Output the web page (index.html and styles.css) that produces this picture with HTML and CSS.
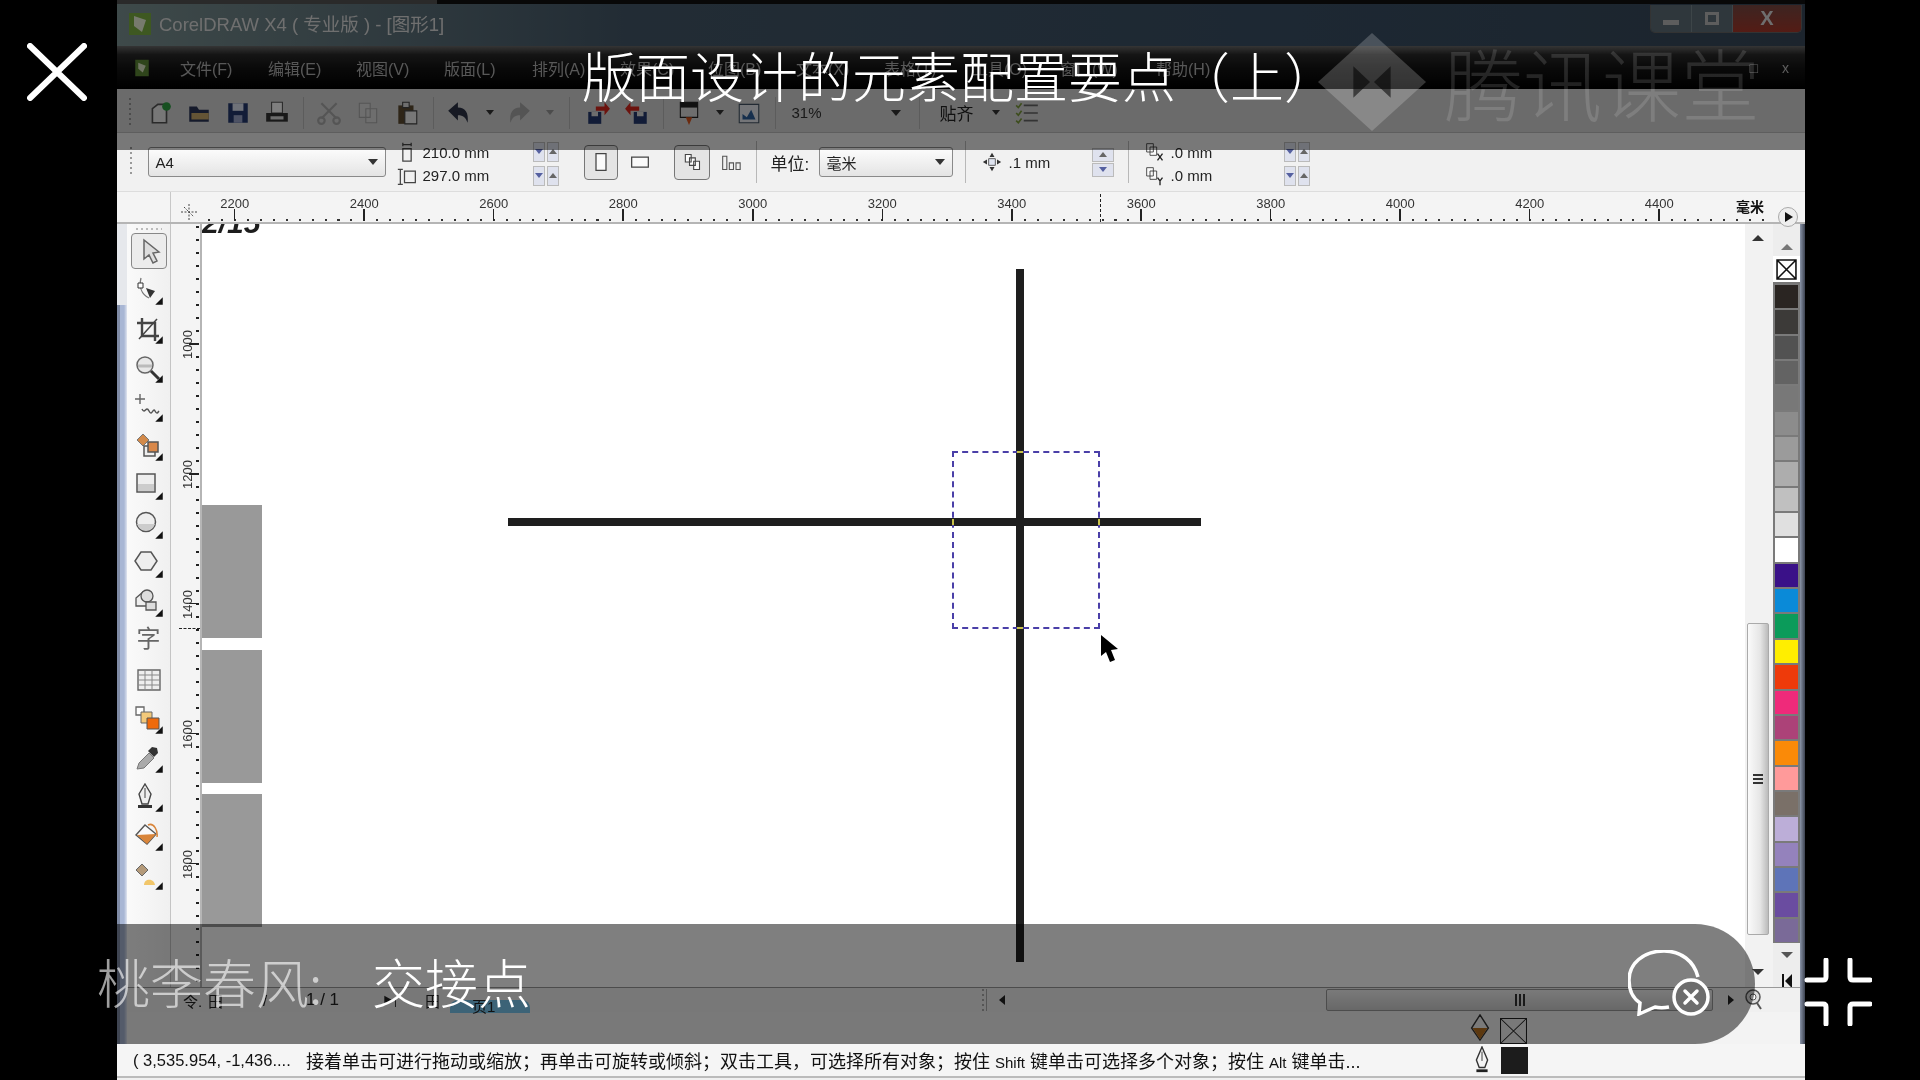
FILE: index.html
```html
<!DOCTYPE html>
<html lang="zh-CN">
<head>
<meta charset="utf-8">
<title>版面设计的元素配置要点（上）</title>
<link rel="stylesheet" href="styles.css">
</head>
<body>
<svg class="defs" width="0" height="0" aria-hidden="true">
  <defs>
    <symbol id="corner" viewBox="0 0 24 24"><path d="M23 17v6h-6z" fill="#111"/></symbol>
    <symbol id="new" viewBox="0 0 24 24"><path d="M5 8l5-4h8v17H5z" fill="#eee" stroke="#555" stroke-width="1.5"/><circle cx="18" cy="6" r="4" fill="#2ea043"/></symbol>
    <symbol id="open" viewBox="0 0 24 24"><path d="M3 6h7l2 3h9v11H3z" fill="#2b3557"/><path d="M5 12h16v6H5z" fill="#c9a86a"/></symbol>
    <symbol id="save" viewBox="0 0 24 24"><path d="M3 3h18v18H3z" fill="#24386e"/><path d="M7 3h10v7H7z" fill="#dfe4f2"/><path d="M8 14h8v7H8z" fill="#9aa5c8"/></symbol>
    <symbol id="print" viewBox="0 0 24 24"><path d="M7 2h10v10H7z" fill="#fff" stroke="#555"/><path d="M2 12h20v8H2z" fill="#333"/><path d="M6 15h12v3H6z" fill="#ddd"/></symbol>
    <symbol id="cut" viewBox="0 0 24 24"><path d="M5 3l14 14M19 3L5 17" stroke="#aaa" stroke-width="2" fill="none"/><circle cx="5" cy="19" r="3" fill="none" stroke="#aaa" stroke-width="2"/><circle cx="19" cy="19" r="3" fill="none" stroke="#aaa" stroke-width="2"/></symbol>
    <symbol id="copy" viewBox="0 0 24 24"><path d="M4 3h10v13H4zM10 8h10v13H10z" fill="#ddd" stroke="#aaa"/></symbol>
    <symbol id="paste" viewBox="0 0 24 24"><path d="M4 5h14v17H4z" fill="#5c4a30"/><path d="M8 2h6v5H8z" fill="#ddd" stroke="#444"/><path d="M10 10h11v12H10z" fill="#eee" stroke="#444"/></symbol>
    <symbol id="undo" viewBox="0 0 24 24"><path d="M2 10l9-8v5c7 0 10 5 9 14-2-5-4-7-9-7v5z" fill="#2c3346"/></symbol>
    <symbol id="redo" viewBox="0 0 24 24"><path d="M22 10l-9-8v5C6 7 3 12 4 21c2-5 4-7 9-7v5z" fill="#a8a8a8"/></symbol>
    <symbol id="imp" viewBox="0 0 24 24"><path d="M3 11h12v11H3z" fill="#24386e"/><path d="M6 11h6v4H6z" fill="#ddd"/><path d="M10 6h8V2l5 6-5 6v-4h-8z" fill="#d9261c"/></symbol>
    <symbol id="exp" viewBox="0 0 24 24"><path d="M9 11h12v11H9z" fill="#24386e"/><path d="M12 11h6v4h-6z" fill="#ddd"/><path d="M14 6H6V2L1 8l5 6v-4h8z" fill="#d9261c"/></symbol>
    <symbol id="pub" viewBox="0 0 24 24"><path d="M4 2h16v14H4z" fill="#ddd" stroke="#222"/><path d="M4 2h16v5H4z" fill="#222"/><path d="M9 16h6l-3 7z" fill="#d9541c"/></symbol>
    <symbol id="app" viewBox="0 0 24 24"><path d="M3 4h18v17H3z" fill="#e8eaf0" stroke="#456"/><path d="M6 18v-5l4 3 4-7 4 9z" fill="#2d5f9a"/></symbol>
    <symbol id="check" viewBox="0 0 24 24"><path d="M9 5h13M9 12h13M9 19h13" stroke="#666" stroke-width="1.5"/><path d="M2 5l2 2 3-4M2 12l2 2 3-4M2 19l2 2 3-4" stroke="#7a9a3a" stroke-width="1.5" fill="none"/></symbol>
    <symbol id="pageh" viewBox="0 0 24 24"><path d="M7 8h10v15H7z" fill="none" stroke="#444" stroke-width="1.5"/><path d="M7 3h10M7 1v4M17 1v4" stroke="#444" stroke-width="1.5"/></symbol>
    <symbol id="pagev" viewBox="0 0 24 24"><path d="M9 6h13v14H9z" fill="none" stroke="#444" stroke-width="1.5"/><path d="M4 4v18M1 4h6M1 22h6" stroke="#444" stroke-width="1.5"/></symbol>
    <symbol id="portrait" viewBox="0 0 24 24"><path d="M6 2h12v20H6z" fill="#fafafa" stroke="#444" stroke-width="1.5"/></symbol>
    <symbol id="landscape" viewBox="0 0 24 24"><path d="M2 6h20v12H2z" fill="#fafafa" stroke="#444" stroke-width="1.5"/></symbol>
    <symbol id="multi" viewBox="0 0 24 24"><path d="M4 3h7v9H4zM9 7h7v9H9zM14 11h7v10h-7z" fill="#fafafa" stroke="#444" stroke-width="1.3"/></symbol>
    <symbol id="single" viewBox="0 0 24 24"><path d="M2 5h5v16H2zM10 13h5v8h-5zM18 13h5v8h-5z" fill="none" stroke="#555" stroke-width="1.3"/></symbol>
    <symbol id="nudge" viewBox="0 0 24 24"><path d="M12 1l3 5H9zM12 23l3-5H9zM1 12l5-3v6zM23 12l-5-3v6z" fill="#333"/><path d="M8 8h8v8H8z" fill="#dfe4f0" stroke="#444"/></symbol>
    <symbol id="dupx" viewBox="0 0 24 24"><path d="M2 2h8v10H2zM6 6h8v10H6z" fill="#fafafa" stroke="#333"/><path d="M15 14l6 8M21 14l-6 8" stroke="#222" stroke-width="1.6"/></symbol>
    <symbol id="dupy" viewBox="0 0 24 24"><path d="M2 2h8v10H2zM6 6h8v10H6z" fill="#fafafa" stroke="#333"/><path d="M15 14l3 4 3-4M18 18v5" stroke="#222" stroke-width="1.6" fill="none"/></symbol>
    <symbol id="arrow" viewBox="0 0 30 30"><path d="M10 4v19l5-4 4 8 4-2-4-8 6-1z" fill="#ddd" stroke="#666" stroke-width="1.5"/></symbol>
    <symbol id="shape" viewBox="0 0 30 30"><use href="#corner" width="30" height="30"/><path d="M7 2c-2 8 0 16 8 20" fill="none" stroke="#777" stroke-width="1.3"/><path d="M4 7h5v5H4z" fill="#fff" stroke="#333"/><path d="M12 12l9 3-5 7z" fill="#333"/></symbol>
    <symbol id="crop" viewBox="0 0 30 30"><use href="#corner" width="30" height="30"/><path d="M8 3v18h17M3 8h18v18" fill="none" stroke="#444" stroke-width="2.4"/><path d="M5 24L23 4" stroke="#444" stroke-width="1.5"/></symbol>
    <symbol id="zoom" viewBox="0 0 30 30"><use href="#corner" width="30" height="30"/><circle cx="11" cy="11" r="8" fill="#e8e8e8" stroke="#666" stroke-width="1.5"/><path d="M4 12h14" stroke="#bbb" stroke-width="3"/><path d="M17 17l8 8" stroke="#333" stroke-width="3"/></symbol>
    <symbol id="curve" viewBox="0 0 30 30"><use href="#corner" width="30" height="30"/><path d="M6 1v10M1 6h10" stroke="#666" stroke-width="1.4"/><path d="M8 16c3 6 4-4 7 2s4-4 6 0 3 1 4 0" fill="none" stroke="#555" stroke-width="1.5"/></symbol>
    <symbol id="smart" viewBox="0 0 30 30"><use href="#corner" width="30" height="30"/><path d="M3 8l6-6 6 6-6 6z" fill="#d28a4a" stroke="#777"/><path d="M10 14h11v10H10z" fill="#eee" stroke="#555" stroke-width="1.5"/><path d="M14 10h10v10H14z" fill="#d9884a" stroke="#555" stroke-width="1.5"/></symbol>
    <symbol id="rect" viewBox="0 0 30 30"><use href="#corner" width="30" height="30"/><path d="M3 3h18v18H3z" fill="#eee" stroke="#555" stroke-width="1.5"/><path d="M4 13h16v7H4z" fill="#ccc"/></symbol>
    <symbol id="ellipse" viewBox="0 0 30 30"><use href="#corner" width="30" height="30"/><circle cx="12" cy="12" r="9.5" fill="#eee" stroke="#555" stroke-width="1.5"/><path d="M3 14h18a9.500 9.500 0 0 1-18 0z" fill="#ccc"/></symbol>
    <symbol id="poly" viewBox="0 0 30 30"><use href="#corner" width="30" height="30"/><path d="M7 3h10l6 9-6 9H7L1 12z" fill="#eee" stroke="#555" stroke-width="1.5"/></symbol>
    <symbol id="basic" viewBox="0 0 30 30"><use href="#corner" width="30" height="30"/><path d="M2 10l7-6 5 6v8H2z" fill="#eee" stroke="#555" stroke-width="1.3"/><circle cx="13" cy="8" r="6" fill="#ddd" stroke="#555" stroke-width="1.3"/><path d="M12 14h10v8H12z" fill="#ddd" stroke="#555" stroke-width="1.3"/></symbol>
    <symbol id="table" viewBox="0 0 30 30"><path d="M4 4h22v20H4z" fill="#eee" stroke="#666" stroke-width="1.4"/><path d="M4 9h22M4 14h22M4 19h22M11 4v20M18 4v20" stroke="#888"/></symbol>
    <symbol id="blend" viewBox="0 0 30 30"><use href="#corner" width="30" height="30"/><path d="M2 2h8v8H2z" fill="#fff" stroke="#666" stroke-width="1.3"/><path d="M7 7h11v11H7z" fill="#f3c97a" stroke="#666"/><path d="M13 13h12v11H13z" fill="#ef6a0c" stroke="#555"/></symbol>
    <symbol id="drop" viewBox="0 0 30 30"><use href="#corner" width="30" height="30"/><path d="M3 25l2-6L15 9l5 5-10 10z" fill="#aaa" stroke="#777"/><path d="M14 7l4-4 5 1 1 5-4 4z" fill="#333"/></symbol>
    <symbol id="pen" viewBox="0 0 30 30"><use href="#corner" width="30" height="30"/><path d="M11 1l6 10-3 10H8L5 11z" fill="#eee" stroke="#444" stroke-width="1.4"/><path d="M11 5v10" stroke="#444"/><path d="M4 22h14v3H4z" fill="#333"/></symbol>
    <symbol id="fill" viewBox="0 0 30 30"><use href="#corner" width="30" height="30"/><path d="M11 3l11 9-9 10-11-9z" fill="#fafafa" stroke="#555" stroke-width="1.4"/><path d="M3 13l19-1-9 10z" fill="#d9853a"/><path d="M14 3c6-3 10 6 9 12" fill="none" stroke="#d9853a" stroke-width="1.5"/></symbol>
    <symbol id="ifill" viewBox="0 0 30 30"><use href="#corner" width="30" height="30"/><path d="M2 9l6-6 6 6-6 6z" fill="#b49a7a" stroke="#666"/><path d="M10 24c0-7 10-7 11 0z" fill="#f1c66a"/></symbol>
  </defs>
</svg>

<main class="stage">
  <section class="app">
    <div class="sliver"></div>
    <header class="titlebar">
      <svg class="logo" viewBox="0 0 24 24"><path d="M1 1h22v22H1z" fill="#7cb043"/><path d="M6 4l12 4-4 12-8-6z" fill="#eef4dc"/></svg>
      <span class="title-text">CorelDRAW X4 ( 专业版 ) - [图形1]</span>
      <div class="winbtns">
        <span class="winbtn"><i class="glyph-min"></i></span>
        <span class="winbtn"><i class="glyph-max"></i></span>
        <span class="winbtn close">X</span>
      </div>
    </header>
    <nav class="menubar">
      <svg class="logo small" viewBox="0 0 24 24"><path d="M3 1h18v22H3z" fill="#5e8a36"/><path d="M7 5l10 4-4 9-6-5z" fill="#dfe9c7"/></svg>
      <span class="menu-item">文件(F)</span><span class="menu-item">编辑(E)</span><span class="menu-item">视图(V)</span><span class="menu-item">版面(L)</span><span class="menu-item">排列(A)</span><span class="menu-item">效果(C)</span><span class="menu-item">位图(B)</span><span class="menu-item">文本(X)</span><span class="menu-item">表格(T)</span><span class="menu-item">工具(O)</span><span class="menu-item">窗口(W)</span><span class="menu-item help">帮助(H)</span>
      <span class="menu-end"><i>□</i><i>x</i></span>
    </nav>
    <div class="toolbar">
      <span class="grip"></span>
      <svg class="ti"><use href="#new"/></svg><svg class="ti"><use href="#open"/></svg><svg class="ti"><use href="#save"/></svg><svg class="ti"><use href="#print"/></svg>
      <span class="sep"></span>
      <svg class="ti"><use href="#cut"/></svg><svg class="ti"><use href="#copy"/></svg><svg class="ti"><use href="#paste"/></svg>
      <span class="sep"></span>
      <svg class="ti"><use href="#undo"/></svg><span class="caret"></span><svg class="ti"><use href="#redo"/></svg><span class="caret dim"></span>
      <span class="sep wide"></span>
      <svg class="ti"><use href="#imp"/></svg><svg class="ti"><use href="#exp"/></svg>
      <span class="sep"></span>
      <svg class="ti"><use href="#pub"/></svg><span class="caret"></span><svg class="ti"><use href="#app"/></svg>
      <span class="sep"></span>
      <span class="combo-zoom">31%<span class="caret end"></span></span>
      <span class="sep"></span>
      <span class="snap">贴齐</span><span class="caret snap-caret"></span><svg class="ti"><use href="#check"/></svg>
    </div>
    <div class="propbar">
      <span class="grip"></span>
      <span class="select a4">A4<span class="caret end"></span></span>
      <div class="dims">
        <div class="dim-row"><svg class="pi"><use href="#pageh"/></svg><span class="dim-val">210.0 mm</span><span class="spin"><b class="down"></b><b class="up"></b></span></div>
        <div class="dim-row"><svg class="pi"><use href="#pagev"/></svg><span class="dim-val">297.0 mm</span><span class="spin"><b class="down"></b><b class="up"></b></span></div>
      </div>
      <span class="pbtn on portrait"><svg class="pi"><use href="#portrait"/></svg></span>
      <span class="pbtn landscape"><svg class="pi"><use href="#landscape"/></svg></span>
      <span class="pbtn on multi"><svg class="pi"><use href="#multi"/></svg></span>
      <span class="pbtn single"><svg class="pi"><use href="#single"/></svg></span>
      <span class="sep tall first-tall"></span>
      <span class="unit-label">单位:</span>
      <span class="select unit">毫米<span class="caret end"></span></span>
      <span class="sep tall"></span>
      <span class="nudge"><svg class="pi"><use href="#nudge"/></svg><span class="dim-val">.1 mm</span><span class="spin col"><b class="up"></b><b class="down"></b></span></span>
      <span class="sep tall"></span>
      <div class="dims dup">
        <div class="dim-row"><svg class="pi"><use href="#dupx"/></svg><span class="dim-val">.0 mm</span><span class="spin"><b class="down"></b><b class="up"></b></span></div>
        <div class="dim-row"><svg class="pi"><use href="#dupy"/></svg><span class="dim-val">.0 mm</span><span class="spin"><b class="down"></b><b class="up"></b></span></div>
      </div>
    </div>
    <div class="ruler-row">
      <div class="ruler-corner">
        <span class="corner-left"></span>
        <svg class="origin" viewBox="0 0 16 16"><path d="M8 0v16M0 8h16M3 3l10 10" stroke="#444" stroke-dasharray="2 1.500" fill="none"/></svg>
      </div>
      <div class="ruler-h">
        <span class="rl">2200</span><span class="rl">2400</span><span class="rl">2600</span><span class="rl">2800</span><span class="rl">3000</span><span class="rl">3200</span><span class="rl">3400</span><span class="rl">3600</span><span class="rl">3800</span><span class="rl">4000</span><span class="rl">4200</span><span class="rl">4400</span>
        <span class="rl-unit">毫米</span>
        <i class="guide-x"></i>
      </div>
      <div class="ruler-cap"><span class="play"></span></div>
    </div>
    <div class="workspace">
      <div class="frame-left"></div>
      <div class="center">
        <div class="main">
          <aside class="toolbox">
            <span class="tool-grip"></span>
            <span class="tool selected"><svg><use href="#arrow"/></svg></span>
            <span class="tool"><svg><use href="#shape"/></svg></span>
            <span class="tool"><svg><use href="#crop"/></svg></span>
            <span class="tool"><svg><use href="#zoom"/></svg></span>
            <span class="tool"><svg><use href="#curve"/></svg></span>
            <span class="tool"><svg><use href="#smart"/></svg></span>
            <span class="tool"><svg><use href="#rect"/></svg></span>
            <span class="tool"><svg><use href="#ellipse"/></svg></span>
            <span class="tool"><svg><use href="#poly"/></svg></span>
            <span class="tool"><svg><use href="#basic"/></svg></span>
            <span class="tool text-tool">字</span>
            <span class="tool"><svg><use href="#table"/></svg></span>
            <span class="tool"><svg><use href="#blend"/></svg></span>
            <span class="tool"><svg><use href="#drop"/></svg></span>
            <span class="tool"><svg><use href="#pen"/></svg></span>
            <span class="tool"><svg><use href="#fill"/></svg></span>
            <span class="tool"><svg><use href="#ifill"/></svg></span>
          </aside>
          <div class="ruler-v">
            <span class="rv">1000</span><span class="rv">1200</span><span class="rv">1400</span><span class="rv">1600</span><span class="rv">1800</span>
            <i class="guide-y"></i>
          </div>
          <div class="canvas">
            <div class="cropped-title"><span>2/15</span></div>
            <div class="page-block b1"></div>
            <div class="page-block b2"></div>
            <div class="page-block b3"></div>
            <div class="line-v"></div>
            <div class="line-h"></div>
            <div class="dash-box"><i class="h-top"></i><i class="h-bottom"></i><i class="h-left"></i><i class="h-right"></i></div>
            <svg class="cursor" viewBox="0 0 18 30"><path d="M0 0v21l5-4 4 10 5-2-4-10 7-1z" fill="#000"/></svg>
          </div>
          <div class="vscroll">
            <span class="tri-up"></span>
            <span class="vthumb"><i></i></span>
            <span class="tri-down"></span>
          </div>
          <div class="palette">
            <span class="tri-up small"></span>
            <span class="swatch-none"><svg viewBox="0 0 20 20"><path d="M1 1h18v18H1zM1 1l18 18M19 1L1 19" fill="#fff" stroke="#111" stroke-width="1.500"/></svg></span>
            <i class="sw c1"></i><i class="sw c2"></i><i class="sw c3"></i><i class="sw c4"></i><i class="sw c5"></i><i class="sw c6"></i><i class="sw c7"></i><i class="sw c8"></i><i class="sw c9"></i><i class="sw c10"></i><i class="sw c11"></i><i class="sw c12"></i><i class="sw c13"></i><i class="sw c14"></i><i class="sw c15"></i><i class="sw c16"></i><i class="sw c17"></i><i class="sw c18"></i><i class="sw c19"></i><i class="sw c20"></i><i class="sw c21"></i><i class="sw c22"></i><i class="sw c23"></i><i class="sw c24"></i><i class="sw c25"></i><i class="sw c26"></i>
            <span class="tri-down small"></span>
            <svg class="first" viewBox="0 0 12 16"><path d="M1 1h2v14H1zM11 1v14L4 8z" fill="#111"/></svg>
          </div>
        </div>
        <div class="hbar">
          <span class="pg pg-nav">令.</span><span class="pg pg-add">田</span><span class="pg pg-slash">/</span><span class="pg pg-count">1 / 1</span><span class="pg pg-next">▶|</span><span class="pg pg-add2">田</span>
          <span class="page-tab">页1</span>
          <span class="hgrip"></span>
          <span class="tri-left"></span>
          <span class="hthumb"><i></i></span>
          <span class="tri-right"></span>
          <svg class="nav-zoom" viewBox="0 0 20 24"><circle cx="10" cy="9" r="7" fill="#ddd" stroke="#555" stroke-width="1.500"/><circle cx="10" cy="9" r="3" fill="#fff" stroke="#555"/><path d="M14 15l4 6" stroke="#555" stroke-width="2"/></svg>
        </div>
        <div class="lower">
          <svg class="fill-ico" viewBox="0 0 22 30"><path d="M11 1l9 14-9 13L2 15z" fill="#f4f4f4" stroke="#333" stroke-width="1.500"/><path d="M3 15h16l-8 12z" fill="#b8701e"/></svg>
          <svg class="fill-box" viewBox="0 0 26 26" preserveAspectRatio="none"><path d="M.5.5h25v25H.500zM.5.5l25 25M25.500.5l-25 25" fill="none" stroke="#222"/></svg>
        </div>
      </div>
      <div class="frame-right"></div>
    </div>
    <footer class="status">
      <span class="coords">( 3,535.954, -1,436....</span>
      <span class="hint">接着单击可进行拖动或缩放；再单击可旋转或倾斜；双击工具，可选择所有对象；按住 <small>Shift</small> 键单击可选择多个对象；按住 <small>Alt</small> 键单击...</span>
      <svg class="pen-ico" viewBox="0 0 22 30"><path d="M11 1l6 14-3 8H8l-3-8z" fill="#f4f4f4" stroke="#333" stroke-width="1.500"/><path d="M11 6v10" stroke="#333"/><path d="M5 25h12v3H5z" fill="#222"/></svg>
      <span class="outline-box"></span>
    </footer>
  </section>

  <div class="top-shade"></div>
  <div class="watermark">
    <svg class="wm-logo" viewBox="0 0 110 100"><path d="M55 0l55 50-55 50L0 50z" fill="#fff" opacity=".2"/><path d="M36 34l17 16-17 16zM74 34L57 50l17 16z" fill="#000" opacity=".55"/></svg>
    <span class="wm-text">腾讯课堂</span>
  </div>
  <h1 class="heading">版面设计的元素配置要点（上）</h1>
  <button class="close-btn" aria-label="关闭"><svg viewBox="0 0 60 58"><path d="M3 3l54 52M57 3L3 55" stroke="#fff" stroke-width="6" stroke-linecap="round" fill="none"/></svg></button>

  <div class="danmu">
    <span class="danmu-name">桃李春风:</span>
    <span class="danmu-text">交接点</span>
    <svg class="danmu-icon" viewBox="0 0 82 66"><path d="M36 1C15 1 1 14 1 30c0 11 5 19 11 23l-1 11 16-7c4 1 9 1 14 0" fill="none" stroke="#fff" stroke-width="3.500"/><path d="M36 1c17 0 30 10 34 26" fill="none" stroke="#fff" stroke-width="3.500"/><circle cx="63" cy="47" r="17" fill="#6d6d6d" stroke="#fff" stroke-width="3.500"/><path d="M57 41l12 12M69 41L57 53" stroke="#fff" stroke-width="3.500" stroke-linecap="round"/></svg>
  </div>
  <svg class="exit-full" viewBox="0 0 68 68"><path d="M3 22h16q3 0 3-3V2M46 2v17q0 3 3 3h17M3 46h16q3 0 3 3v17M46 66V49q0-3 3-3h17" fill="none" stroke="#fff" stroke-width="5" stroke-linecap="round"/></svg>
</main>
</body>
</html>
```
FILE: styles.css
```css
* { box-sizing: border-box; }
html, body { margin: 0; width: 1920px; height: 1080px; overflow: hidden; background: #000; }
body { font-family: "Liberation Sans", "Noto Sans CJK SC", sans-serif; color: #333; }
.defs { position: absolute; }
.stage { position: relative; width: 1920px; height: 1080px; overflow: hidden; }

/* captured window */
.app { width: 1688px; height: 1080px; margin-left: 117px; display: flex; flex-direction: column; background: #f0f0f0; filter: blur(.6px); }
.sliver { height: 4px; background: linear-gradient(90deg, #555 0 320px, #111 320px); }
.titlebar { height: 42px; display: flex; align-items: flex-start; padding: 8px 3px 0 11px; background: linear-gradient(90deg, #7d9494 0, #45596a 30%, #3a5066 70%, #38495a 100%); }
.logo { width: 24px; height: 24px; flex: none; }
.logo.small { width: 18px; height: 24px; margin: 0 29px 0 4px; }
.title-text { margin-left: 7px; font-size: 18.5px; line-height: 26px; color: #dedede; white-space: nowrap; }
.winbtns { margin-left: auto; display: flex; height: 28px; border: 1px solid #666; border-top: 0; border-radius: 0 0 5px 5px; overflow: hidden; margin-top: -7px; }
.winbtn { width: 41px; display: flex; align-items: center; justify-content: center; background: #5f6f78; border-right: 1px solid #7a8a90; }
.winbtn.close { width: 68px; background: linear-gradient(#7a4a44, #a8382a); color: #ddd; font-size: 20px; font-weight: bold; border: 0; }
.glyph-min { width: 16px; height: 5px; margin-top: 8px; background: #bbb; }
.glyph-max { width: 14px; height: 13px; border: 3px solid #bbb; }
.menubar { height: 43px; display: flex; align-items: center; padding-left: 12px; background: linear-gradient(#6a6a6a 0, #2a2a2a 20%, #141414 50%, #000 100%); color: #b0b0b0; font-size: 16px; }
.menu-item { width: 88px; flex: none; }
.menu-item.help { margin-left: 8px; }
.menu-end { margin-left: auto; display: flex; gap: 24px; padding-right: 16px; font-size: 14px; font-style: normal; color: #bbb; }
.menu-end i { font-style: normal; }

.toolbar { height: 44px; display: flex; align-items: center; padding: 4px 0 0 9px; background: #d6d6d6; border-bottom: 1px solid #bdbdbd; }
.grip { width: 8px; height: 30px; flex: none; margin-right: 6.5px; background: repeating-linear-gradient(#999 0 2px, transparent 2px 5px) 3px 0 / 2px 100% no-repeat; }
.ti { width: 26px; height: 26px; flex: none; margin: 0 6.5px; }
.sep { width: 1px; height: 32px; flex: none; margin: 0 6px; background: #b8b8b8; }
.sep.wide { margin: 0 9px; }
.sep.tall { height: 42px; margin: 0 12px; }
.sep.first-tall { margin-left: 8px; }
.caret { width: 0; height: 0; flex: none; margin: 0 6px 0 7px; border-left: 4px solid transparent; border-right: 4px solid transparent; border-top: 5px solid #333; }
.caret.dim { border-top-color: #999; }
.caret.end { margin: 0 0 0 auto; border-left-width: 5px; border-right-width: 5px; border-top-width: 6px; }
.caret.snap-caret { margin: 0 8px 0 18px; }
.combo-zoom { width: 125px; height: 30px; flex: none; display: flex; align-items: center; padding: 0 6px 0 10px; margin-right: 6px; font-size: 15px; color: #333; }
.snap { margin-left: 14px; font-size: 17px; color: #222; }

.propbar { height: 59px; display: flex; align-items: center; padding-left: 10px; background: #f1f1f1; border-bottom: 1px solid #ddd; color: #222; font-size: 15px; }
.select { height: 30px; flex: none; display: flex; align-items: center; padding: 0 7px; border: 1px solid #8a8a8a; border-radius: 3px; background: linear-gradient(#fdfdfd, #e4e4e4); }
.select.a4 { width: 238px; margin-left: 6px; }
.select.unit { width: 134px; }
.dims { width: 164px; flex: none; margin: 4px 0 0 11px; display: flex; flex-direction: column; }
.dims.dup { width: 167px; margin-left: 4px; }
.dim-row { height: 23.5px; display: flex; align-items: center; }
.pi { width: 20px; height: 20px; flex: none; }
.dim-val { margin-left: 6px; font-size: 15px; }
.spin { margin-left: auto; display: flex; gap: 2px; padding-right: 2px; }
.spin b { width: 12px; height: 20px; display: block; position: relative; background: #dfe2ee; border: 1px solid #bbb; }
.spin b::after { content: ""; position: absolute; left: 1px; top: 6px; border-left: 4px solid transparent; border-right: 4px solid transparent; }
.spin b.up::after { border-bottom: 5px solid #666; }
.spin b.down::after { border-top: 5px solid #5560a0; }
.spin.col { flex-direction: column; gap: 1px; }
.spin.col b { width: 22px; height: 14px; }
.spin.col b::after { left: 6px; top: 3px; }
.pbtn { width: 33px; height: 35px; flex: none; display: flex; align-items: center; justify-content: center; border: 1px solid transparent; border-radius: 4px; }
.pbtn.on { border-color: #777; background: #e4e4e4; }
.pbtn.portrait { width: 34px; margin-left: 23px; }
.pbtn.landscape { margin-left: 6px; }
.pbtn.multi { width: 36px; margin-left: 17px; }
.pbtn.single { margin-left: 5px; }
.unit-label { width: 48px; flex: none; margin-left: 2px; font-size: 17px; }
.nudge { width: 134px; height: 32px; flex: none; display: flex; align-items: center; margin-left: 4px; }
.nudge .dim-val { margin-left: 7px; }

.ruler-row { height: 32px; display: flex; background: #f4f4f4; border-bottom: 2px solid #b5b5b5; }
.ruler-corner { width: 85px; flex: none; position: relative; }
.corner-left { display: block; width: 54px; height: 100%; border-right: 1px solid #c8c8c8; }
.origin { position: absolute; left: 64px; top: 12px; width: 16px; height: 16px; }
.ruler-h { flex: 1; position: relative; display: flex; font-size: 13px; color: #333; overflow: hidden; padding-top: 4px; }
.ruler-h::before { content: ""; position: absolute; left: 6px; right: 0; bottom: 1px; height: 2px; background: repeating-linear-gradient(90deg, #333 0 2px, transparent 2px 12.95px); }
.ruler-h::after { content: ""; position: absolute; left: 32px; right: 0; bottom: 1px; height: 12px; background: repeating-linear-gradient(90deg, #222 0 1.5px, transparent 1.5px 129.5px); }
.rl { width: 129.5px; flex: none; text-align: center; }
.rl:first-child { margin-left: -32px; }
.rl-unit { margin-left: 12px; font-size: 14px; color: #111; font-weight: bold; white-space: nowrap; }
.guide-x { position: absolute; left: 898px; top: 2px; height: 28px; border-left: 1.5px dashed #222; }
.ruler-cap { width: 37px; flex: none; display: flex; justify-content: center; padding-top: 15px; padding-left: 2px; }
.play { width: 20px; height: 20px; border-radius: 50%; border: 1px solid #aaa; background: #eee; position: relative; }
.play::after { content: ""; position: absolute; left: 6px; top: 4px; border-left: 8px solid #111; border-top: 5px solid transparent; border-bottom: 5px solid transparent; }

.workspace { height: 820px; display: flex; }
.frame-left { width: 10px; flex: none; background: linear-gradient(#e6e8ec 0 81px, transparent 81px), linear-gradient(90deg, #7f8ba5 0 30%, #a8b6d4 30% 70%, #dfe4ef 100%); }
.frame-right { width: 5px; flex: none; background: linear-gradient(90deg, #8a94a8, #3c4250); }
.center { flex: 1; min-width: 0; display: flex; flex-direction: column; }
.main { height: 763px; display: flex; }
.toolbox { width: 44px; flex: none; display: flex; flex-direction: column; align-items: center; background: linear-gradient(90deg, #fafafa, #f0f0f0); border-right: 1px solid #c4c4c4; }
.tool-grip { width: 26px; height: 8px; flex: none; background: repeating-linear-gradient(90deg, #bbb 0 2px, transparent 2px 5px) 0 4px / 100% 2px no-repeat; }
.tool { width: 36px; height: 39px; flex: none; display: flex; align-items: center; justify-content: center; color: #555; }
.tool svg { width: 30px; height: 30px; }
.tool.selected { height: 36px; margin: 1px 0 2px; border: 1.5px solid #888; border-radius: 4px; background: #ececec; }
.text-tool { font-size: 24px; line-height: 30px; padding-bottom: 5px; font-weight: normal; color: #666; }
.ruler-v { width: 31px; flex: none; position: relative; display: flex; flex-direction: column; background: #f4f4f4; border-right: 2px solid #b5b5b5; padding-top: 56px; font-size: 13px; color: #333; }
.ruler-v::before { content: ""; position: absolute; top: 2px; bottom: 0; right: 1px; width: 3px; background: repeating-linear-gradient(#222 0 2px, transparent 2px 13px); }
.ruler-v::after { content: ""; position: absolute; top: 119px; bottom: 0; right: 3px; width: 8px; background: repeating-linear-gradient(#222 0 1.5px, transparent 1.5px 130px); }
.rv { height: 130px; flex: none; writing-mode: vertical-rl; transform: rotate(180deg); text-align: center; margin-left: 3px; align-self: center; }
.guide-y { position: absolute; left: 8px; right: 0; top: 404px; border-top: 1.5px dashed #222; }

/* free drawing surface */
.canvas { flex: 1; position: relative; background: #fff; overflow: hidden; }
.cropped-title { position: absolute; left: 0; top: 0; width: 62px; height: 16px; overflow: hidden; }
.cropped-title span { display: block; margin-top: -17px; font-size: 30px; line-height: 32px; font-weight: bold; color: #1d1d1d; font-style: italic; white-space: nowrap; }
.page-block { position: absolute; left: 0; width: 60px; background: #999; }
.b1 { top: 281px; height: 133px; }
.b2 { top: 426px; height: 133px; }
.b3 { top: 570px; height: 133px; }
.line-v { position: absolute; left: 814px; top: 45px; width: 8px; height: 693px; background: #1e1e1e; }
.line-h { position: absolute; left: 306px; top: 294px; width: 693px; height: 8px; background: #1e1e1e; }
.dash-box { position: absolute; left: 750px; top: 227px; width: 148px; height: 178px; border: 2px dashed #4a3fa8; }
.dash-box i { position: absolute; background: #c9c24a; }
.h-top { left: 63px; top: -2px; width: 6px; height: 2px; }
.h-bottom { left: 63px; bottom: -2px; width: 6px; height: 2px; }
.h-left { left: -2px; top: 66px; width: 2px; height: 6px; }
.h-right { right: -2px; top: 66px; width: 2px; height: 6px; }
.cursor { position: absolute; left: 899px; top: 411px; width: 18px; height: 30px; }

.vscroll { width: 28px; flex: none; position: relative; display: flex; flex-direction: column; align-items: center; background: #f2f2f2; padding: 11px 3px 0 0; }
.tri-up, .tri-down { flex: none; border-left: 6px solid transparent; border-right: 6px solid transparent; }
.tri-up { border-bottom: 6px solid #333; }
.tri-down { border-top: 6px solid #333; }
.tri-up.small { border-bottom-color: #777; }
.tri-down.small { border-top-color: #555; }
.vthumb { width: 22px; height: 312px; margin: 382px 0 34px; display: flex; align-items: center; justify-content: center; border: 1px solid #aaa; border-radius: 2px; background: linear-gradient(90deg, #fafafa, #e6e6e6 60%, #bbb); }
.vthumb i { width: 10px; height: 10px; background: repeating-linear-gradient(#333 0 2px, transparent 2px 4px); }
.palette { width: 27px; flex: none; display: flex; flex-direction: column; align-items: center; background: #ededed; padding-top: 20px; }
.swatch-none { width: 27px; height: 28px; flex: none; display: flex; align-items: center; justify-content: center; margin-top: 6px; background: #fff; border-bottom: 2px solid #777; }
.swatch-none svg { width: 21px; height: 21px; }
.sw { width: 27px; height: 25.35px; flex: none; border: 1px solid #7a7a7a; border-width: 1px 2px; }
.c1 { background: #2a2522; } .c2 { background: #3c3a38; } .c3 { background: #525252; } .c4 { background: #636363; }
.c5 { background: #787878; } .c6 { background: #8c8c8c; } .c7 { background: #9b9b9b; } .c8 { background: #adadad; }
.c9 { background: #c0c0c0; } .c10 { background: #e0e0e0; } .c11 { background: #fff; } .c12 { background: #3a1188; }
.c13 { background: #0a8ad8; } .c14 { background: #0b9b5a; } .c15 { background: #ffee00; } .c16 { background: #ee3a0a; }
.c17 { background: #ef2a7a; } .c18 { background: #ac4278; } .c19 { background: #fa8a08; } .c20 { background: #ff9a9a; }
.c21 { background: #7a7068; } .c22 { background: #bcaed8; } .c23 { background: #9482bc; } .c24 { background: #5e74b8; }
.c25 { background: #6a4ca0; } .c26 { background: #7a6a98; }
.palette .tri-down { margin-top: 9px; }
.first { width: 12px; height: 16px; margin-top: 15px; flex: none; }

.hbar { height: 25px; flex: none; display: flex; align-items: center; background: #f0f0f0; border-top: 1px solid #999; font-size: 15px; color: #222; position: relative; }
.pg { flex: none; }
.pg-nav { margin-left: 56px; width: 19px; }
.pg-add { margin-left: 6px; width: 15px; }
.pg-slash { margin-left: 40px; width: 4px; }
.pg-count { margin-left: 39px; width: 38px; font-size: 17px; white-space: nowrap; }
.pg-next { margin-left: 39px; width: 28px; font-size: 11px; }
.pg-add2 { margin-left: 14px; width: 15px; }
.page-tab { width: 80px; height: 13px; margin: 12px 0 0 10px; flex: none; display: flex; align-items: flex-end; padding-left: 22px; background: #79c6ee; border-radius: 8px 8px 0 0; font-size: 15px; line-height: 12px; }
.hgrip { width: 8px; height: 22px; flex: none; margin-left: 449px; background: repeating-linear-gradient(#aaa 0 2px, transparent 2px 5px) 3px 0 / 2px 100% no-repeat; border-right: 1px solid #aaa; }
.tri-left { flex: none; margin-left: 12px; border-top: 5px solid transparent; border-bottom: 5px solid transparent; border-right: 6px solid #222; }
.hthumb { width: 387px; height: 22px; flex: none; margin-left: 321px; display: flex; align-items: center; justify-content: center; border: 1px solid #999; border-radius: 2px; background: linear-gradient(#f4f4f4, #d0d0d0); }
.hthumb i { width: 10px; height: 12px; background: repeating-linear-gradient(90deg, #333 0 2px, transparent 2px 4px); }
.tri-right { flex: none; margin-left: 15px; border-top: 5px solid transparent; border-bottom: 5px solid transparent; border-left: 6px solid #222; }
.nav-zoom { width: 20px; height: 24px; flex: none; margin-left: 9px; }

.lower { height: 32px; flex: none; display: flex; align-items: center; padding-left: 1342px; background: #f3f3f3; }
.fill-ico { width: 22px; height: 28px; flex: none; }
.fill-box { width: 27px; height: 26px; margin-left: 9px; margin-top: 6px; flex: none; }
.status { height: 34px; flex: none; display: flex; align-items: center; padding-left: 16px; background: #f5f5f5; border-bottom: 2px solid #bbb; color: #111; }
.coords { width: 173px; flex: none; font-size: 16.5px; white-space: nowrap; }
.hint { width: 1165px; flex: none; font-size: 18px; white-space: nowrap; }
.hint small { font-size: 15px; }
.pen-ico { width: 22px; height: 28px; flex: none; }
.outline-box { width: 27px; height: 27px; flex: none; margin-left: 8px; background: #1c1c1c; }

/* player chrome on top of the video */
.top-shade { position: absolute; left: 0; top: 0; width: 100%; height: 150px; background: rgba(0, 0, 0, .5); }
.watermark { position: absolute; left: 1318px; top: 32px; display: flex; align-items: center; gap: 18px; }
.wm-logo { width: 108px; height: 100px; flex: none; }
.wm-text { font-family: "Noto Sans CJK SC", sans-serif; font-weight: 300; font-size: 79px; line-height: 100px; color: rgba(255, 255, 255, .13); white-space: nowrap; }
.heading { position: absolute; left: 0; right: 0; top: 37px; margin: 0; text-align: center; font-family: "Noto Sans CJK SC", sans-serif; font-weight: 300; font-size: 54px; line-height: 76px; color: #fff; }
.close-btn { position: absolute; left: 27px; top: 43px; width: 60px; height: 58px; padding: 0; border: 0; background: none; }
.close-btn svg { display: block; width: 100%; height: 100%; }
.danmu { position: absolute; left: 0; top: 924px; width: 1755px; height: 120px; display: flex; align-items: center; padding: 0 45px 6px 97px; border-radius: 60px; background: rgba(0, 0, 0, .5); font-family: "Noto Sans CJK SC", sans-serif; font-weight: 300; font-size: 53px; }
.danmu-name { color: rgba(255, 255, 255, .62); width: 275px; flex: none; white-space: nowrap; }
.danmu-text { color: #fff; }
.danmu-icon { width: 82px; height: 66px; margin-left: auto; margin-top: 3px; flex: none; }
.exit-full { position: absolute; left: 1804px; top: 958px; width: 68px; height: 68px; }
```
